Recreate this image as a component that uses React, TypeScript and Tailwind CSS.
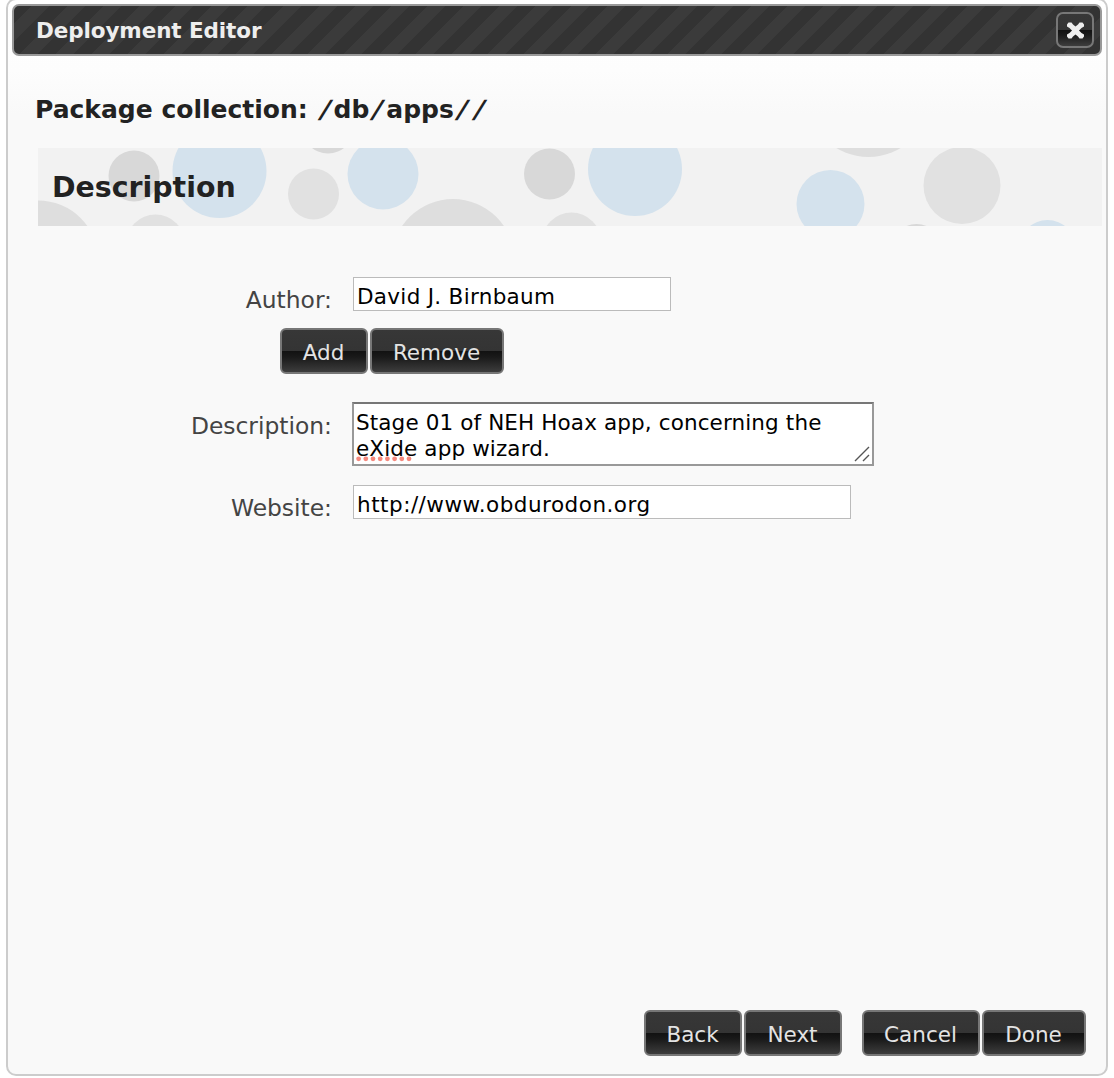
import React from "react";

const bubbles = [
  [38, 261, 60.5, "#dedede"],
  [134, 176, 25.5, "#d8d8d8"],
  [155.5, 244, 29.5, "#e1e1e1"],
  [219.5, 171, 47, "#d4e2ed"],
  [328, 127.5, 26, "#d8d8d8"],
  [313.5, 194, 25.5, "#e1e1e1"],
  [383, 174, 35.5, "#d4e2ed"],
  [453, 260.5, 61.5, "#dedede"],
  [549.5, 174, 25.5, "#d8d8d8"],
  [571.5, 242, 29.5, "#e1e1e1"],
  [635, 169, 47, "#d4e2ed"],
  [868.5, 95, 62, "#dedede"],
  [830.5, 204, 34, "#d4e2ed"],
  [962, 185.5, 38.5, "#e1e1e1"],
  [916.5, 250, 26, "#d8d8d8"],
  [1047.5, 248.5, 28.5, "#d4e2ed"],
] as const;

function Button({ children, className }: { children: React.ReactNode; className: string }) {
  return (
    <button
      className={`h-[46px] rounded-[6px] border-2 border-[#777] bg-[linear-gradient(#373737_0%,#343434_49%,#111_50%,#1a1a1a_65%,#3d3d3d_100%)] pr-[1px] pt-[3px] text-[21.5px] leading-[26px] text-[#e3e3e3] ${className}`}
    >
      {children}
    </button>
  );
}

function Label({ children, className }: { children: React.ReactNode; className: string }) {
  return (
    <label className={`w-[326px] pr-[6px] text-right text-[23.4px] leading-[28px] text-[#444] ${className}`}>
      {children}
    </label>
  );
}

function Slash() {
  return <span className="inline-block w-[17px] -skew-x-[14deg] scale-x-110 text-center">/</span>;
}

export default function App() {
  return (
    <div className="h-[1078px] w-[1114px] overflow-hidden bg-white pl-[6px] font-['DejaVu_Sans',Verdana,sans-serif]">
      <div className="-mt-[2px] flex h-[1078px] w-[1102px] flex-col rounded-[10px] border-2 border-[#ccc] bg-[linear-gradient(#fff_0px,#fdfdfd_70px,#f9f9f9_115px)] pl-1 pt-1">
        <header className="flex h-[52px] w-[1090px] shrink-0 items-center justify-between rounded-[7px] border-2 border-[#999] bg-[#333] bg-[repeating-linear-gradient(135deg,#333_0px,#333_12px,#3b3b3b_12.4px,#3b3b3b_24.7px,#333_25.1px,#333_25.456px)] bg-origin-padding pl-[22px] pr-[6px]">
          <h1 className="pt-[2px] text-[21.5px] font-bold leading-[28px] tracking-[-0.1px] text-[#eee]">Deployment Editor</h1>
          <button
            aria-label="Close"
            className="flex h-9 w-[38px] items-center justify-center rounded-[7px] border-2 border-[#777] bg-[linear-gradient(#373737_0%,#343434_49%,#111_50%,#1a1a1a_65%,#3d3d3d_100%)]"
          >
            <svg width="20" height="18" viewBox="0 0 20 18">
              <path
                d="M3.5 1.5H6.5L8 3.5 10.5 5.5 13 3.5 14.5 1.5H17.5L19 3.5V5.5L16.5 7 14 9.5 16.5 12 19 13.5V15.5L17.5 17.5H14.5L13 15.5 10.5 13.5 8 15.5 6.5 17.5H3.5L2 15.5V13.5L4.5 12 7 9.5 4.5 7 2 5.5V3.5Z"
                fill="#eee"
              />
            </svg>
          </button>
        </header>
        <h2 className="mb-[-1px] ml-[23px] mt-[39px] whitespace-nowrap text-[25px] font-bold leading-[30px] text-[#222]">
          Package collection: <Slash />db<Slash />apps<Slash /><Slash />
        </h2>
        <section className="relative ml-[26px] mt-6 h-[78px] w-[1064px] shrink-0 overflow-hidden bg-[#f2f2f2]">
          <svg className="absolute inset-0" width="1064" height="78" viewBox="38 148 1064 78">
            {bubbles.map(([x, y, r, fill]) => (
              <circle key={x} cx={x} cy={y} r={r} fill={fill} />
            ))}
          </svg>
          <h3 className="relative ml-[14px] mt-[23px] text-[28.4px] font-bold leading-[34px] text-[#222]">Description</h3>
        </section>
        <form className="mt-[51px] flex flex-col items-start">
          <div className="flex h-9">
            <Label className="pt-[9px]">Author:</Label>
            <input
              readOnly
              defaultValue="David J. Birnbaum"
              className="ml-[15px] h-[34px] w-[318px] border border-[#bbb] bg-white pl-[3px] pt-[5px] text-[21.5px] leading-[26px] tracking-[0.3px] text-black"
            />
          </div>
          <div className="ml-[268px] mt-[15px] flex gap-[2px]">
            <Button className="w-[88px]">Add</Button>
            <Button className="w-[134px]">Remove</Button>
          </div>
          <div className="mt-7 flex">
            <Label className="pt-[10px]">Description:</Label>
            <div className="relative ml-[14px] h-[64px] w-[522px] border-2 border-[#999] border-t-[#777] bg-white pl-[2px] pt-[6px] text-[21.5px] leading-[26px] tracking-[0.12px] text-black">
              <div className="whitespace-nowrap">Stage 01 of NEH Hoax app, concerning the</div>
              <svg className="absolute left-[2px] top-[52px]" width="58" height="6">
                {[0, 1, 2, 3, 4, 5, 6, 7].map((i) => (
                  <circle key={i} cx={2.6 + i * 7.2} cy="2.8" r="2.4" fill="#f5887d" />
                ))}
              </svg>
              <div className="relative whitespace-nowrap">eXide app wizard.</div>
              <svg className="absolute bottom-[2px] right-[2px]" width="16" height="16">
                <path d="M1 15 15 1M9 15 15 9" stroke="#555" strokeWidth="1.4" />
              </svg>
            </div>
          </div>
          <div className="mt-[19px] flex">
            <Label className="pt-[9px]">Website:</Label>
            <input
              readOnly
              defaultValue="http://www.obdurodon.org"
              className="ml-[15px] h-[34px] w-[498px] border border-[#bbb] bg-white pl-[3px] pt-[5px] text-[21.5px] leading-[26px] tracking-[0.5px] text-black"
            />
          </div>
        </form>
        <footer className="mb-[18px] mr-5 mt-auto flex justify-end gap-[2px]">
          <Button className="w-[98px]">Back</Button>
          <Button className="w-[98px]">Next</Button>
          <Button className="ml-[18px] w-[118px]">Cancel</Button>
          <Button className="w-[104px]">Done</Button>
        </footer>
      </div>
    </div>
  );
}
